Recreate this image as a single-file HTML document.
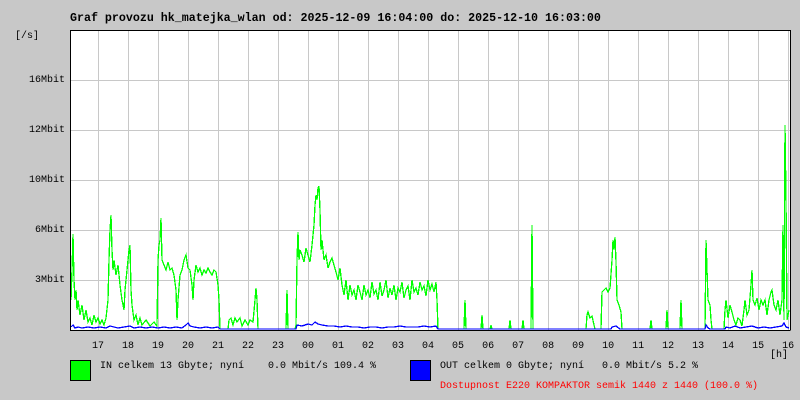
<!DOCTYPE html>
<html><head><meta charset="utf-8"><style>
body{margin:0;width:800px;height:400px;background:#c8c8c8;overflow:hidden;position:relative;font-family:"Liberation Mono",monospace;}
.t{position:absolute;font-size:10px;white-space:pre;line-height:12px;color:#000;}
</style></head><body>
<svg width="800" height="400" style="position:absolute;left:0;top:0" shape-rendering="crispEdges">
<rect x="70" y="30" width="720" height="300" fill="#fff"/>
<g stroke="#c8c8c8" stroke-width="1">
<line x1="70" y1="80.5" x2="790" y2="80.5"/><line x1="70" y1="130.5" x2="790" y2="130.5"/><line x1="70" y1="180.5" x2="790" y2="180.5"/><line x1="70" y1="230.5" x2="790" y2="230.5"/><line x1="70" y1="280.5" x2="790" y2="280.5"/>
<path d="M98.5 30V330M128.5 30V330M158.5 30V330M188.5 30V330M218.5 30V330M248.5 30V330M278.5 30V330M308.5 30V330M338.5 30V330M368.5 30V330M398.5 30V330M428.5 30V330M458.5 30V330M488.5 30V330M518.5 30V330M548.5 30V330M578.5 30V330M608.5 30V330M638.5 30V330M668.5 30V330M698.5 30V330M728.5 30V330M758.5 30V330M788.5 30V330"/>
</g>
<polyline fill="none" stroke="#00ff00" stroke-width="1.3" points="71,300 72,270 73,234 74,280 75,300 76,290 77,310 78,300 80,315 82,305 84,320 86,310 88,322 90,318 92,325 94,315 96,322 98,318 100,324 102,320 104,325 106,318 108,300 109,260 110,230 111,215 112,250 113,270 114,260 116,275 118,265 120,285 122,300 124,310 125,290 127,270 129,250 130,245 131,290 132,305 134,320 136,315 138,325 140,318 142,325 146,320 150,326 154,322 157,326 158,260 159,245 160,240 161,218 162,260 164,265 166,270 168,262 170,270 172,268 174,275 176,290 177,320 178,300 180,275 182,270 184,260 186,255 188,268 190,270 192,285 193,300 194,280 196,265 198,272 200,268 202,275 204,270 206,273 208,268 210,272 212,275 214,270 216,272 218,285 219,300 220,329 228,329 229,320 231,318 233,325 235,318 237,322 240,318 242,326 245,320 248,325 250,320 253,322 255,300 256,288 257,300 258,329 286,329 287,290 288,329 295,329 296,325 297,260 298,232 299,260 300,250 302,255 304,262 306,248 308,255 310,262 312,245 314,225 315,205 316,195 317,200 318,188 319,186 320,210 321,250 322,240 324,260 326,255 328,268 330,262 332,258 334,265 336,272 338,280 340,268 342,285 344,295 346,280 348,300 350,285 352,295 354,290 356,300 358,285 360,292 362,300 364,285 366,295 368,290 370,298 372,282 374,294 376,290 378,300 380,282 382,296 384,290 386,280 388,298 390,288 392,295 394,285 396,300 398,288 400,292 402,282 404,298 406,290 408,286 410,300 412,280 414,292 416,288 418,295 420,282 422,290 424,286 426,296 428,280 430,290 432,284 434,292 436,282 437,300 438,329 464,329 465,300 466,329 481,329 482,315 483,329 490,329 491,325 492,329 509,329 510,320 511,329 522,329 523,320 524,329 531,329 532,225 533,329 586,329 587,315 588,312 590,318 592,316 594,325 595,329 601,329 602,292 604,290 606,288 608,292 610,288 612,260 613,240 614,250 615,237 616,262 617,300 619,305 621,312 622,329 650,329 651,320 652,329 666,329 667,310 668,329 680,329 681,300 682,329 705,329 706,240 707,270 708,300 710,305 711,320 712,329 724,329 725,310 726,300 728,318 730,305 732,312 734,320 736,325 738,318 740,320 742,326 744,310 745,300 747,315 749,310 751,285 752,270 753,300 755,305 757,298 759,310 761,300 763,305 765,300 767,315 769,300 771,292 772,290 774,305 776,310 778,300 780,315 782,300 783,225 784,320 785,125 786,200 787,320 789,310"/>
<polyline fill="none" stroke="#0000ff" stroke-width="1.3" points="71,327 73,325 75,328 78,327 82,328 88,327 94,328 100,327 106,328 110,326 114,327 118,328 124,327 130,326 134,328 140,327 146,328 152,327 158,328 164,327 170,328 176,327 182,328 186,325 188,323 190,326 194,327 200,328 206,327 212,328 218,327 220,329 296,329 297,325 302,326 308,324 312,325 315,322 318,324 322,325 328,326 334,326 340,327 346,326 352,327 358,327 364,328 370,327 376,327 382,328 388,327 394,327 400,326 406,327 412,327 418,327 424,326 430,327 436,326 438,329 611,329 612,327 616,326 620,329 705,329 706,325 708,328 710,329 725,329 726,327 730,328 735,326 740,328 746,327 752,326 758,328 764,327 770,328 776,327 782,326 784,323 786,327 789,328"/>
<path d="M70.5 30V330.5H790.5M70 30.5H790.5V330" fill="none" stroke="#000" stroke-width="1"/>
<rect x="70.5" y="360.5" width="20" height="20" fill="#00ff00" stroke="#000"/>
<rect x="410.5" y="360.5" width="20" height="20" fill="#0000ff" stroke="#000"/>
</svg>
<div class="t" style="left:70px;top:12px;font-size:11.65px;font-weight:bold;line-height:14px">Graf provozu hk_matejka_wlan od: 2025-12-09 16:04:00 do: 2025-12-10 16:03:00</div>
<div class="t" style="left:15px;top:31px">[/s]</div>
<div class="t" style="left:29px;top:75px">16Mbit</div>
<div class="t" style="left:29px;top:125px">12Mbit</div>
<div class="t" style="left:29px;top:175px">10Mbit</div>
<div class="t" style="left:35px;top:225px">6Mbit</div>
<div class="t" style="left:35px;top:275px">3Mbit</div>
<div class="t" style="left:92px;top:341px">17   18   19   20   21   22   23   00   01   02   03   04   05   06   07   08   09   10   11   12   13   14   15   16</div>
<div class="t" style="left:770px;top:350px">[h]</div>
<div class="t" style="left:100px;top:361px">IN celkem 13 Gbyte; nyní    0.0 Mbit/s 109.4 %</div>
<div class="t" style="left:440px;top:361px">OUT celkem 0 Gbyte; nyní   0.0 Mbit/s 5.2 %</div>
<div class="t" style="left:440px;top:381px;color:#ff0000">Dostupnost E220 KOMPAKTOR semik 1440 z 1440 (100.0 %)</div>
</body></html>
